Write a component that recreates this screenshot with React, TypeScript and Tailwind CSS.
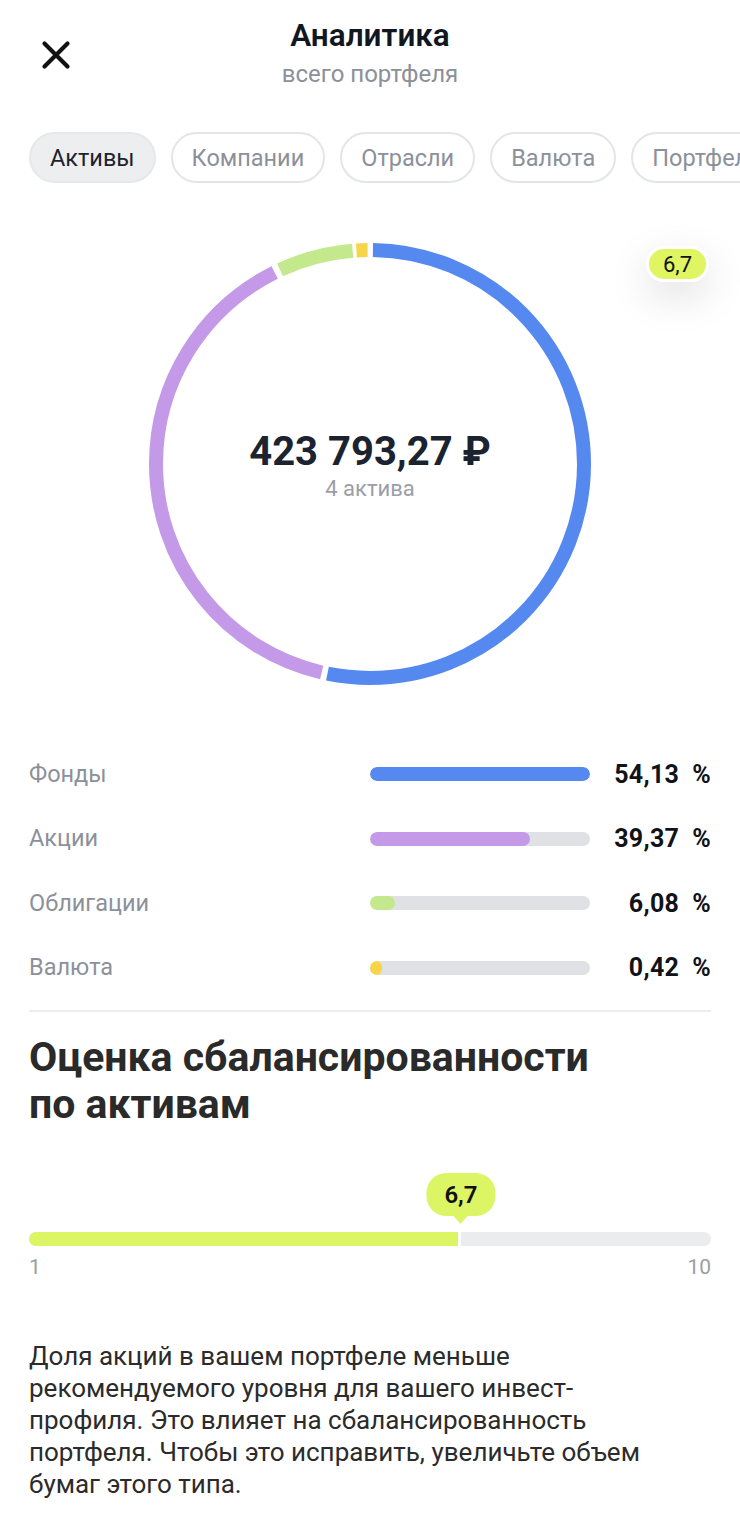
import { X } from "lucide-react";

const tabs = ["Активы", "Компании", "Отрасли", "Валюта", "Портфели"];

const rows = [
  { label: "Фонды", value: "54,13 %", pct: 100, color: "bg-[#5589ef]" },
  { label: "Акции", value: "39,37 %", pct: 72.7, color: "bg-[#c49ae8]" },
  { label: "Облигации", value: "6,08 %", pct: 11.2, color: "bg-[#c4e98c]" },
  { label: "Валюта", value: "0,42 %", pct: 5.5, color: "bg-[#f7d548]" },
];

// donut arcs in degrees, clockwise from 12 o'clock
const arcs = [
  { from: 0.8, to: 191.4, color: "#5589ef" },
  { from: 193.0, to: 333.4, color: "#c49ae8" },
  { from: 335.0, to: 355.2, color: "#c4e98c" },
  { from: 356.2, to: 359.2, color: "#f7d548" },
];

function Donut() {
  const r = 214;
  const c = 2 * Math.PI * r;
  return (
    <svg width="442" height="442" viewBox="0 0 442 442">
      <g transform="rotate(-90 221 221)">
        {arcs.map((a) => (
          <circle
            key={a.color}
            cx="221"
            cy="221"
            r={r}
            fill="none"
            stroke={a.color}
            strokeWidth="14"
            strokeDasharray={`${((a.to - a.from) / 360) * c} ${c}`}
            strokeDashoffset={-(a.from / 360) * c}
          />
        ))}
      </g>
    </svg>
  );
}

export default function App() {
  const score = 6.7;
  const fill = ((score - 1) / 9) * 100;

  return (
    <div className="min-h-screen bg-white font-['Roboto',sans-serif] overflow-hidden">
      <header className="flex items-start px-[29px] pt-[17px]">
        <button className="w-[60px] h-[56px] flex items-center justify-start mt-[10px] text-[#111]">
          <X className="w-[46px] h-[46px] ml-[4px]" strokeWidth={2.2} />
        </button>
        <div className="flex-1 flex flex-col items-center">
          <h1 className="text-[31.5px] leading-[38px] font-semibold text-[#12161f]">Аналитика</h1>
          <p className="text-[24px] leading-[30px] text-[#8c909a] mt-[4px]">всего портфеля</p>
        </div>
        <div className="w-[60px]" />
      </header>

      <nav className="flex gap-[15px] pl-[29px] mt-[43px] whitespace-nowrap">
        {tabs.map((t, i) => (
          <div
            key={t}
            className={
              "shrink-0 h-[51px] px-[19px] pt-[3px] flex items-center rounded-full border-2 text-[23.5px] " +
              (i === 0
                ? "bg-[#eceef0] border-[#e6e8eb] text-[#1d222b]"
                : "bg-white border-[#e3e5e8] text-[#8c909a]")
            }
          >
            {t}
          </div>
        ))}
      </nav>

      <section className="relative mt-[60px] flex justify-center">
        <Donut />
        <div className="absolute inset-0 flex flex-col items-center justify-center pt-[4px]">
          <div className="text-[40px] leading-[46px] font-bold text-[#1b2230]">423 793,27 ₽</div>
          <div className="text-[22px] leading-[28px] text-[#9a9ea7]">4 актива</div>
        </div>
        <div className="absolute right-[31px] top-[3px] h-[36px] px-[14px] flex items-center rounded-full bg-[#dff562] border-[3px] border-white text-[22px] text-[#111] shadow-[0_14px_40px_rgba(0,0,0,0.13)]">
          6,7
        </div>
      </section>

      <div className="px-[29px] mt-[57px]">
        {rows.map((r) => (
          <div key={r.label} className="h-[64.5px] flex items-center">
            <span className="w-[341px] text-[23.5px] text-[#8c909a]">{r.label}</span>
            <div className="w-[220px] h-[14px] rounded-full bg-[#e0e1e4] overflow-hidden">
              <div className={"h-full rounded-full " + r.color} style={{ width: `${r.pct}%` }} />
            </div>
            <span className="flex-1 text-right text-[25px] font-bold tracking-[0.3px] text-[#111318]">
              {r.value.replace(" ", "\u2002")}
            </span>
          </div>
        ))}

        <div className="mt-[10px] h-[2px] bg-[#ebecee]" />

        <h2 className="mt-[22px] text-[41px] leading-[47px] font-bold text-[#2a2a2a]">
          Оценка сбалансированности
          <br />
          по активам
        </h2>

        <div className="relative mt-[104px]">
          <div
            className="absolute bottom-[22px] -translate-x-1/2 flex flex-col items-center"
            style={{ left: `${fill}%` }}
          >
            <div className="h-[43px] px-[18px] flex items-center rounded-[20px] bg-[#dcf564] text-[24px] font-semibold text-[#111]">
              6,7
            </div>
            <div className="w-0 h-0 border-l-[7px] border-r-[7px] border-t-[8px] border-l-transparent border-r-transparent border-t-[#dcf564]" />
          </div>
          <div className="flex h-[14px] rounded-full overflow-hidden bg-[#ebecee]">
            <div className="h-full bg-[#dcf564] border-r-[3px] border-white" style={{ width: `${fill}%` }} />
          </div>
        </div>
        <div className="flex justify-between mt-[8px] text-[21px] leading-[26px] text-[#9a9ea7]">
          <span>1</span>
          <span>10</span>
        </div>

        <p className="mt-[60px] text-[26px] leading-[32px] text-[#2b2b2b]">
          Доля акций в вашем портфеле меньше
          <br />
          рекомендуемого уровня для вашего инвест-
          <br />
          профиля. Это влияет на сбалансированность
          <br />
          портфеля. Чтобы это исправить, увеличьте объем
          <br />
          бумаг этого типа.
        </p>
      </div>
    </div>
  );
}
